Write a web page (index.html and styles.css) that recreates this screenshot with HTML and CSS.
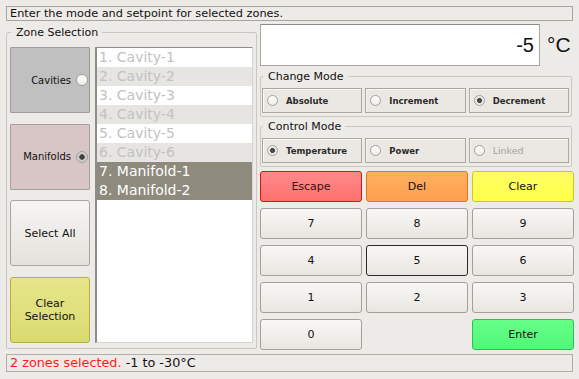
FILE: index.html
```html
<!DOCTYPE html>
<html>
<head>
<meta charset="utf-8">
<link rel="stylesheet" href="styles.css">
</head>
<body>
<div class="app">
  <div class="hint">Enter the mode and setpoint for selected zones.</div>
  <div class="main">
    <fieldset class="group zone">
      <legend>Zone Selection</legend>
      <div class="zone-body">
        <div class="zone-buttons">
          <div class="zbtn cav">Cavities <span class="radio"></span></div>
          <div class="zbtn man">Manifolds <span class="radio checked"></span></div>
          <div class="zbtn plain">Select All</div>
          <div class="zbtn clearsel">Clear<br>Selection</div>
        </div>
        <div class="list">
          <div class="item">1. Cavity-1</div>
          <div class="item alt">2. Cavity-2</div>
          <div class="item">3. Cavity-3</div>
          <div class="item alt">4. Cavity-4</div>
          <div class="item">5. Cavity-5</div>
          <div class="item alt">6. Cavity-6</div>
          <div class="item sel">7. Manifold-1</div>
          <div class="item sel">8. Manifold-2</div>
        </div>
      </div>
    </fieldset>
    <div class="right">
      <div class="display-row">
        <div class="display">-5</div>
        <div class="unit">°C</div>
      </div>
      <fieldset class="group mode">
        <legend>Change Mode</legend>
        <div class="opts">
          <div class="opt"><span class="radio"></span>Absolute</div>
          <div class="opt"><span class="radio"></span>Increment</div>
          <div class="opt"><span class="radio checked"></span>Decrement</div>
        </div>
      </fieldset>
      <fieldset class="group mode ctrl">
        <legend>Control Mode</legend>
        <div class="opts">
          <div class="opt"><span class="radio checked"></span>Temperature</div>
          <div class="opt"><span class="radio"></span>Power</div>
          <div class="opt disabled"><span class="radio"></span>Linked</div>
        </div>
      </fieldset>
      <div class="keypad">
        <div class="key esc">Escape</div>
        <div class="key del">Del</div>
        <div class="key clr">Clear</div>
        <div class="key">7</div>
        <div class="key">8</div>
        <div class="key">9</div>
        <div class="key">4</div>
        <div class="key focus">5</div>
        <div class="key">6</div>
        <div class="key">1</div>
        <div class="key">2</div>
        <div class="key">3</div>
        <div class="key">0</div>
        <div class="key-gap"></div>
        <div class="key enter">Enter</div>
      </div>
    </div>
  </div>
  <div class="status"><span class="red">2 zones selected.</span> -1 to -30°C</div>
</div>
</body>
</html>
```

FILE: styles.css
```css
* { box-sizing: border-box; }
html, body { margin: 0; padding: 0; }
body {
  background: #edebe7;
  font-family: "DejaVu Sans", sans-serif;
  color: #1a1a1a;
}
.app {
  width: 579px;
  height: 379px;
  padding: 6px 6px 7px 6px;
  display: flex;
  flex-direction: column;
  background: #edebe7;
}
.hint {
  height: 15px;
  border: 1px solid #a8a49e;
  font-size: 11.3px;
  line-height: 13px;
  padding-left: 3px;
  white-space: nowrap;
  color: #111;
}
.main {
  margin-top: 3px;
  height: 326px;
  display: flex;
  align-items: flex-start;
}
.group {
  margin: 0;
  border: 1px solid #cbc7c1;
  border-radius: 2px;
  min-width: 0;
}
.group legend {
  font-size: 11px;
  line-height: 13px;
  padding: 0 4px 0 5px;
  margin-left: 1px;
  color: #111;
}
.zone {
  margin-top: 2px;
  width: 251px;
  height: 323px;
  padding: 8px 3px 5px 3px;
}
.zone-body {
  display: flex;
  gap: 5px;
  height: 296px;
}
.zone-buttons {
  width: 80px;
  display: flex;
  flex-direction: column;
  justify-content: space-between;
}
.zbtn {
  height: 66px;
  border-radius: 3px;
  font-size: 11px;
  display: flex;
  align-items: center;
  justify-content: center;
  text-align: center;
  line-height: 13px;
  color: #111;
}
.cav {
  background: #c0c0c0;
  border: 1px solid #9c9c9c;
  border-radius: 1px;
  font-size: 10px;
  justify-content: flex-end;
  padding-right: 1px;
}
.man {
  background: #d8c5c5;
  border: 1px solid #a99d9d;
  border-radius: 1px;
  font-size: 10px;
  justify-content: flex-end;
  padding-right: 1px;
}
.cav .radio, .man .radio { margin-left: 5px; width: 12px; height: 12px; }
.plain {
  background: linear-gradient(#f6f5f3, #e5e2dd);
  border: 1px solid #aaa69f;
}
.clearsel {
  background: linear-gradient(#e6e68a, #dada72);
  border: 1px solid #b3b13e;
}
.radio {
  display: inline-block;
  width: 11px;
  height: 11px;
  border-radius: 50%;
  border: 1px solid #a3a19d;
  background: linear-gradient(#ffffff, #ecebe8);
  flex: none;
}
.radio.checked {
  background: radial-gradient(circle, #4a4a4a 0, #4a4a4a 2.2px, #e6e4e0 2.8px, #f8f8f6 100%);
}
.man .radio.checked {
  background: radial-gradient(circle, #404040 0, #404040 2.4px, #c8c6c2 3px, #e0dedb 100%);
}
.list {
  width: 158px;
  height: 296px;
  background: #fff;
  border: 1px solid #d6d3ce;
  border-top-color: #8f8c87;
  border-left: 2px solid #8f8c87;
}
.item {
  height: 19px;
  line-height: 19px;
  font-size: 14px;
  padding-left: 2px;
  color: #c2c2c2;
  background: #fff;
  white-space: nowrap;
}
.item.alt { background: #e7e5e1; }
.item.sel { background: #8e8a7e; color: #fff; }
.right {
  margin-left: 3px;
  width: 313px;
  display: flex;
  flex-direction: column;
}
.display-row {
  display: flex;
  align-items: center;
  height: 42px;
}
.display {
  width: 280px;
  height: 42px;
  background: #fff;
  border: 1px solid #a9a6a1;
  border-top-color: #8f8c87;
  font-family: "Liberation Sans", sans-serif;
  font-size: 20px;
  line-height: 40px;
  text-align: right;
  padding-right: 5px;
  color: #111;
}
.unit {
  font-family: "Liberation Sans", sans-serif;
  font-size: 21px;
  margin-left: 7px;
  color: #111;
}
.mode {
  margin-top: 4px;
  width: 312px;
  padding: 5px 2px 3px 1px;
}
.mode legend { margin-left: 1px; }
.mode.ctrl { margin-top: 3px; }
.opts {
  display: grid;
  grid-template-columns: 1fr 1fr 1fr;
  column-gap: 3px;
}
.opt {
  height: 25px;
  border: 1px solid #aaa6a0;
  box-shadow: inset 1px 1px 0 #f7f6f4;
  background: #ebe8e4;
  display: flex;
  align-items: center;
  padding-left: 4px;
  font-size: 8.5px;
  font-weight: bold;
  color: #2a2a2a;
}
.opt .radio { margin-right: 8px; }
.opt.disabled { color: #a4a29e; font-weight: normal; font-size: 9.5px; }
.keypad {
  margin-top: 4px;
  display: grid;
  grid-template-columns: repeat(3, 102px);
  grid-auto-rows: 31px;
  column-gap: 4px;
  row-gap: 6px;
}
.key {
  border: 1px solid #a3a09a;
  border-radius: 3px;
  background: linear-gradient(#f8f7f5, #e9e6e1);
  font-size: 11px;
  display: flex;
  align-items: center;
  justify-content: center;
  color: #111;
}
.key.focus { border-color: #2b2b2b; }
.key.esc { background: linear-gradient(#ff8a8a, #ff7070); border-color: #e01010; color: #3a1010; }
.key.del { background: linear-gradient(#ffb060, #ffa050); border-color: #e07810; }
.key.clr { background: linear-gradient(#ffff66, #ffff48); border-color: #c8c820; }
.key.enter { background: linear-gradient(#66ff88, #50f878); border-color: #30c050; }
.status {
  margin-top: 4px;
  height: 18px;
  border: 1px solid #b0aca6;
  font-size: 12.8px;
  line-height: 16px;
  padding-left: 3px;
  white-space: nowrap;
  color: #111;
}
.red { color: #ff1a1a; }
```
